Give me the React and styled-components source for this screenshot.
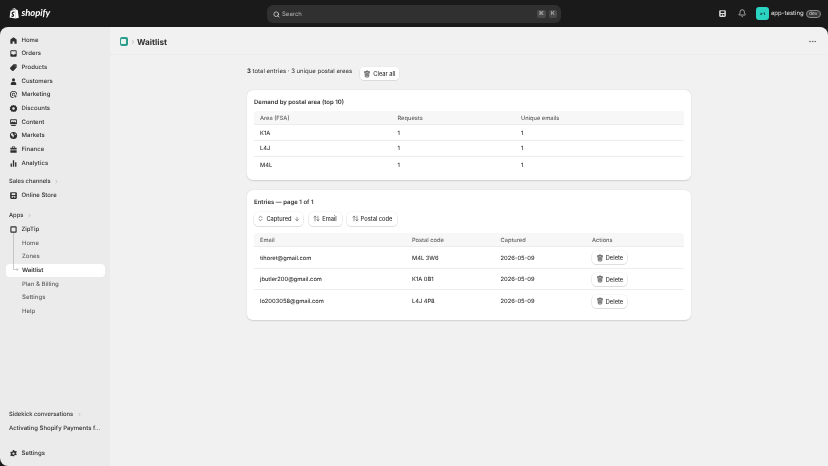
import React from "react";
import styled, { createGlobalStyle } from "styled-components";
import { SiShopify } from "react-icons/si";
import { ArrowUpDown, ChevronsUpDown, ArrowDown, ChevronRight, Search as SearchIcon, Ellipsis, Bell } from "lucide-react";

const Global = createGlobalStyle`
  html, body { margin: 0; padding: 0; background: #1a1a1a; }
  body { font-family: Inter, "Liberation Sans", sans-serif; color: #303030; -webkit-font-smoothing: antialiased; text-rendering: geometricPrecision; }
  * { box-sizing: border-box; }
`;

const Frame = styled.div`
  width: 828px; height: 466px; background: #1a1a1a; display: flex; flex-direction: column; overflow: hidden; will-change: transform;
`;
const TopBar = styled.header`
  height: 27px; flex: none; display: grid; grid-template-columns: 267px 294px 1fr; align-items: center; color: #e3e3e3;
`;
const Brand = styled.div`
  display: flex; align-items: center; padding-left: 9px; gap: 2px; color: #fff;
`;
const BrandName = styled.span`
  font: italic 700 9.5px Lato, "Liberation Sans", sans-serif; letter-spacing: -0.1px;
`;
const SearchBar = styled.div`
  height: 18px; background: #303030; border-radius: 6px; display: flex; align-items: center; padding: 1px 4px 0 6px; gap: 2px;
  color: #b5b5b5; font-size: 6px;
`;
const Keys = styled.div`margin-left: auto; display: flex; gap: 3px;`;
const Key = styled.span`
  width: 8.5px; height: 8.5px; border-radius: 2px; background: #4a4a4a; color: #d4d4d4; font-size: 5.5px;
  display: flex; align-items: center; justify-content: center;
`;
const TopRight = styled.div`
  display: flex; align-items: center; padding-left: 151px; color: #e3e3e3;
`;
const TopIcon = styled.span`
  width: 20px; display: flex; justify-content: center; color: #d8d8d8;
`;
const Avatar = styled.span`
  width: 13px; height: 13px; margin-left: 4px; border-radius: 3px; background: #2bd4c2; color: #0b3d38; font-size: 4px; font-weight: 700;
  display: flex; align-items: center; justify-content: center;
`;
const StoreName = styled.span`font-size: 6px; margin-left: 2px; color: #e3e3e3; white-space: nowrap;`;
const Dev = styled.span`
  font-size: 4.8px; border: 0.5px solid #8a8a8a; border-radius: 4px; padding: 0 2.5px; height: 8px; line-height: 7px; margin-left: 2px; background: #3a3a3a; color: #cfcfcf;
`;

const Body = styled.div`
  flex: 1; display: flex; min-height: 0; border-radius: 8px 8px 0 8px; overflow: hidden;
`;
const Sidebar = styled.nav`
  width: 110px; flex: none; background: #ebebeb; padding: 6.2px 5.5px 5.5px; display: flex; flex-direction: column; position: relative;
`;
const NavRow = styled.div`
  height: 13.7px; flex: none; display: flex; align-items: center; padding-left: 3.5px; border-radius: 4px; gap: 3.5px;
  font-size: 6px; font-weight: ${p => (p.$strong ? 600 : 500)};
  color: #303030; background: ${p => (p.$active ? "#fff" : "transparent")}; white-space: nowrap;
`;
const SubRow = styled(NavRow)`
  padding-left: 16.5px; font-weight: ${p => (p.$active ? 600 : 450)}; color: ${p => (p.$active ? "#303030" : "#616161")};
`;
const NavIcon = styled.svg`width: 9px; height: 9px; flex: none; fill: #303030;`;
const SectionLabel = styled.div`
  height: 13.7px; flex: none; display: flex; align-items: center; gap: 2px; padding-left: 3.5px; font-size: 5.8px; font-weight: 450; color: #303030;
  margin-top: ${p => p.$gap || 0}px; white-space: nowrap;
`;
const Tree = styled.svg`
  position: absolute; left: 11px; top: 206px; width: 12px; height: 40px; fill: none; stroke: #b5b5b5; stroke-width: 0.7;
`;
const Bottom = styled.div`margin-top: auto; display: flex; flex-direction: column;`;
const Convo = styled(NavRow)`padding-left: 3.5px; font-weight: 450; margin-bottom: 11.5px;`;

const Main = styled.main`
  flex: 1; background: #f1f1f1; min-width: 0;
`;
const PageHeader = styled.div`
  height: 27.5px; display: flex; align-items: center; padding: 2.5px 11px 0 9.5px; border-bottom: 0.5px dotted #e6e6e6;
`;
const AppGlyph = styled.span`
  width: 8.5px; height: 8.5px; border-radius: 2px; background: #2a9d8f; display: flex; align-items: center; justify-content: center; flex: none;
  &::after { content: ""; width: 5px; height: 4.5px; background: #e8f3ee; border-radius: 0.7px; }
`;
const Crumb = styled.span`color: #8a8a8a; display: flex; margin: 0 1.5px;`;
const PageTitle = styled.h1`margin: 0; padding-top: 0.5px; font-size: 8.2px; font-weight: 650; color: #303030;`;
const More = styled.span`margin-left: auto; color: #616161; display: flex;`;

const Content = styled.div`
  width: 444px; margin-left: 137px; padding-top: 12.5px; display: flex; flex-direction: column; gap: 10px;
`;
const Summary = styled.div`
  display: flex; align-items: center; gap: 7.5px; height: 13px; font-size: 6px; color: #303030;
  & > span { position: relative; top: -2.5px; }
  b { font-weight: 700; }
`;
const Button = styled.button`
  font: 500 5.7px Inter, "Liberation Sans", sans-serif; color: #303030; background: #fff; border: 0; border-radius: 4px;
  height: 13.5px; width: ${p => p.$w}px; padding: 0; display: inline-flex; align-items: center; justify-content: center; gap: 2px; flex: none;
  box-shadow: 0 0.5px 0 0.3px #d4d4d4, 0 0 0 0.3px #e3e3e3;
`;
const Card = styled.section`
  background: #fff; border-radius: 6px; padding: 7px 7px 0; height: ${p => p.$h}px;
  box-shadow: 0 0.5px 1.5px rgba(0,0,0,0.14);
`;
const CardTitle = styled.h2`margin: 0; height: 11px; line-height: 12px; font-size: 6px; font-weight: 600; color: #303030;`;
const Toolbar = styled.div`display: flex; gap: 5.5px; margin-top: 4px; margin-bottom: 7.5px;`;
const Table = styled.div`display: flex; flex-direction: column; margin-top: ${p => p.$top || 0}px;`;
const Row = styled.div`
  display: grid; grid-template-columns: ${p => p.$cols}; height: ${p => p.$h}px; align-items: center; padding: ${p => (p.$head ? "1px" : "0.5px")} 0 0 6px;
  font-size: 5.7px; color: ${p => (p.$head ? "#616161" : "#303030")}; font-weight: 450;
  background: ${p => (p.$head ? "#f7f7f7" : "transparent")};
  border-bottom: ${p => (p.$last ? "0" : p.$head ? "0.5px solid #ececec" : "0.5px solid #ededed")};
  border-radius: ${p => (p.$head ? "3px 3px 0 0" : "0")};
`;
const BodyCell = styled.span`position: relative; top: ${p => p.$shift || 0}px;`;

const I = ({ d }) => <NavIcon viewBox="0 0 20 20"><path fillRule="evenodd" d={d} /></NavIcon>;
const icons = {
  home: "M10 2.5 3 8v9h5v-5h4v5h5V8z",
  orders: "M5 3h10a2 2 0 0 1 2 2v10a2 2 0 0 1-2 2H5a2 2 0 0 1-2-2V5a2 2 0 0 1 2-2zM5 5v6h2.5l1 2h3l1-2H15V5z",
  products: "M10 3h6a1 1 0 0 1 1 1v6l-7.5 7.5a1.4 1.4 0 0 1-2 0l-5-5a1.4 1.4 0 0 1 0-2zM13.5 5.5a1 1 0 1 0 0 2 1 1 0 0 0 0-2z",
  customers: "M10 2.5a3.5 3.5 0 1 1 0 7 3.5 3.5 0 0 1 0-7zM4 14.5c0-2.5 2.5-4 6-4s6 1.5 6 4V17.5H4z",
  marketing: "M10 2a8 8 0 0 1 8 8h-2a6 6 0 1 0-6 6v2a8 8 0 0 1 0-16zM10 6a4 4 0 0 1 4 4h-2a2 2 0 1 0-2 2v2a4 4 0 0 1 0-8zM11 11l7 2.5-3 1.5-1.5 3z",
  discounts: "M10 2l2.3 1.6 2.8-.2.9 2.7 2.3 1.6-.9 2.7.9 2.7-2.3 1.2-.9 2.7-2.8-.2L10 18l-2.3-1.6-2.8.2-.9-2.7L1.7 12.7 2.6 10l-.9-2.3L4 6.1l.9-2.7 2.800.2zM10 7a3 3 0 1 0 0 6 3 3 0 0 0 0-6z",
  content: "M4 3h12a1.500 1.500 0 0 1 1.500 1.500v8A1.500 1.500 0 0 1 16 14H4a1.500 1.500 0 0 1-1.500-1.500v-8A1.500 1.500 0 0 1 4 3zM4.500 5v5l3-2.500 2.500 2 2-1.500 3.500 2.500V5zM5 15.500h10V17.500H5z",
  markets: "M10 2a8 8 0 1 1 0 16 8 8 0 0 1 0-16zM5 5.500 4 9l3.500 2 1 4 2-3 .5-3-3-2 .5-2.500zM13 5l-1 2 3 2 1 1a6 6 0 0 0-3-5z",
  finance: "M8 2.500h4a1 1 0 0 1 1 1V6h4v4H3V6h4V3.500a1 1 0 0 1 1-1zM8.500 4v2h3V4zM3 11.500h14V17H3z",
  analytics: "M8.500 3h3v14h-3zM3.500 10h3v7h-3zM13.500 7h3v10h-3z",
  store: "M5 2.500h10A2.500 2.500 0 0 1 17.500 5v10a2.500 2.500 0 0 1-2.500 2.500H5A2.500 2.500 0 0 1 2.500 15V5A2.500 2.500 0 0 1 5 2.500zM6 5v4h8V5zM6 11v4h2.500v-3h3v3H14v-4z",
  app: "M5 3h10a2 2 0 0 1 2 2v10a2 2 0 0 1-2 2H5a2 2 0 0 1-2-2V5a2 2 0 0 1 2-2zM5.500 5.500v9h9v-9z",
  settings: "M8.500 2h3l.5 2.200 1.700.8 2.100-.9 1.500 2.600-1.600 1.500v1.800l1.600 1.500-1.500 2.600-2.100-.9-1.700.8-.5 2.200h-3L8 15.800l-1.700-.8-2.100.9-1.500-2.600 1.600-1.500V10l-1.600-1.700L4.200 5.700l2.100.9L8 5.800zM10 7.500a2.500 2.500 0 1 0 0 5 2.500 2.500 0 0 0 0-5z",
};

const Trash = ({ s = 8 }) => (
  <svg width={s} height={s} viewBox="0 0 20 20" fill="none" stroke="#303030" strokeWidth="1.8" strokeLinecap="round">
    <path d="M7.500 4.500V3.500a1 1 0 0 1 1-1h3a1 1 0 0 1 1 1v1M3.500 5h13M5 5l.8 11a1.500 1.500 0 0 0 1.500 1.500h5.400a1.500 1.500 0 0 0 1.500-1.500L15 5M8.300 8.500v6M11.700 8.500v6" />
  </svg>
);

const Chev = ({ s = 6 }) => <Crumb><ChevronRight size={s} strokeWidth={2} /></Crumb>;

const mainNav = [
  ["Home", "home"], ["Orders", "orders"], ["Products", "products"], ["Customers", "customers"], ["Marketing", "marketing"],
  ["Discounts", "discounts"], ["Content", "content"], ["Markets", "markets"], ["Finance", "finance"], ["Analytics", "analytics"],
];
const sub = ["Home", "Zones", "Waitlist", "Plan & Billing", "Settings", "Help"];
const demand = [["K1A", "1", "1"], ["L4J", "1", "1"], ["M4L", "1", "1"]];
const entries = [
  ["tihoret@gmail.com", "M4L 3W6", "2026-05-09"],
  ["jbutler200@gmail.com", "K1A 0B1", "2026-05-09"],
  ["lo2003058@gmail.com", "L4J 4P8", "2026-05-09"],
];

export default function App() {
  return (
    <Frame>
      <Global />
      <TopBar>
        <Brand>
          <SiShopify size={10.5} />
          <BrandName>shopify</BrandName>
        </Brand>
        <SearchBar>
          <SearchIcon size={7} strokeWidth={2.5} color="#e3e3e3" />
          <span>Search</span>
          <Keys><Key>⌘</Key><Key>K</Key></Keys>
        </SearchBar>
        <TopRight>
          <TopIcon>
            <svg width="9" height="9" viewBox="0 0 20 20" fill="#d8d8d8"><path fillRule="evenodd" d="M5 2.500h10A2.500 2.500 0 0 1 17.500 5v10a2.500 2.500 0 0 1-2.500 2.500H5A2.500 2.500 0 0 1 2.500 15V5A2.500 2.500 0 0 1 5 2.500zM6 5v4h8V5zM6 11v4h2.500v-3h3v3H14v-4z" /></svg>
          </TopIcon>
          <TopIcon><Bell size={8.5} strokeWidth={2} /></TopIcon>
          <Avatar>a-t</Avatar>
          <StoreName>app-testing</StoreName>
          <Dev>dev</Dev>
        </TopRight>
      </TopBar>
      <Body>
        <Sidebar>
          {mainNav.map(([t, k]) => <NavRow key={t}><I d={icons[k]} />{t}</NavRow>)}
          <SectionLabel $gap={5}>Sales channels <Chev s={5} /></SectionLabel>
          <NavRow><I d={icons.store} />Online Store</NavRow>
          <SectionLabel $gap={6.5}>Apps <Chev s={5} /></SectionLabel>
          <NavRow><I d={icons.app} />ZipTip</NavRow>
          {sub.map(t => <SubRow key={t} $active={t === "Waitlist"}>{t}</SubRow>)}
          <Tree viewBox="0 0 12 40"><path d="M2.500 0V36.500H7M5.500 35l1.500 1.500L5.500 38" /></Tree>
          <Bottom>
            <SectionLabel>Sidekick conversations <Chev s={5} /></SectionLabel>
            <Convo>Activating Shopify Payments f...</Convo>
            <NavRow><I d={icons.settings} />Settings</NavRow>
          </Bottom>
        </Sidebar>
        <Main>
          <PageHeader>
            <AppGlyph />
            <Chev />
            <PageTitle>Waitlist</PageTitle>
            <More><Ellipsis size={9} strokeWidth={2} /></More>
          </PageHeader>
          <Content>
            <Summary>
              <span><b>3</b> total entries · 3 unique postal areas</span>
              <Button $w={39.5}><Trash />Clear all</Button>
            </Summary>
            <Card $h={90}>
              <CardTitle>Demand by postal area (top 10)</CardTitle>
              <Table $top={3}>
                <Row $head $h={14} $cols="137.5px 123.5px 1fr"><span>Area (FSA)</span><span>Requests</span><span>Unique emails</span></Row>
                {demand.map((r, i) => (
                  <Row key={r[0]} $h={15.8} $last={i === 2} $cols="137.5px 123.5px 1fr">
                    {r.map((c, j) => <BodyCell key={j} $shift={0.5}>{c}</BodyCell>)}
                  </Row>
                ))}
              </Table>
            </Card>
            <Card $h={130}>
              <CardTitle>Entries — page 1 of 1</CardTitle>
              <Toolbar>
                <Button $w={49}><ChevronsUpDown size={7} strokeWidth={1.8} />Captured<ArrowDown size={6} strokeWidth={1.8} /></Button>
                <Button $w={33}><ArrowUpDown size={7} strokeWidth={1.8} />Email</Button>
                <Button $w={50}><ArrowUpDown size={7} strokeWidth={1.8} />Postal code</Button>
              </Toolbar>
              <Table>
                <Row $head $h={14} $cols="152px 88.5px 91.5px 1fr"><span>Email</span><span>Postal code</span><span>Captured</span><span>Actions</span></Row>
                {entries.map((r, i) => (
                  <Row key={r[0]} $h={21.7} $last={i === 2} $cols="152px 88.5px 91.5px 1fr">
                    {r.map((c, j) => <BodyCell key={j} $shift={0.5}>{c}</BodyCell>)}
                    <span><Button $w={35}><Trash />Delete</Button></span>
                  </Row>
                ))}
              </Table>
            </Card>
          </Content>
        </Main>
      </Body>
    </Frame>
  );
}
